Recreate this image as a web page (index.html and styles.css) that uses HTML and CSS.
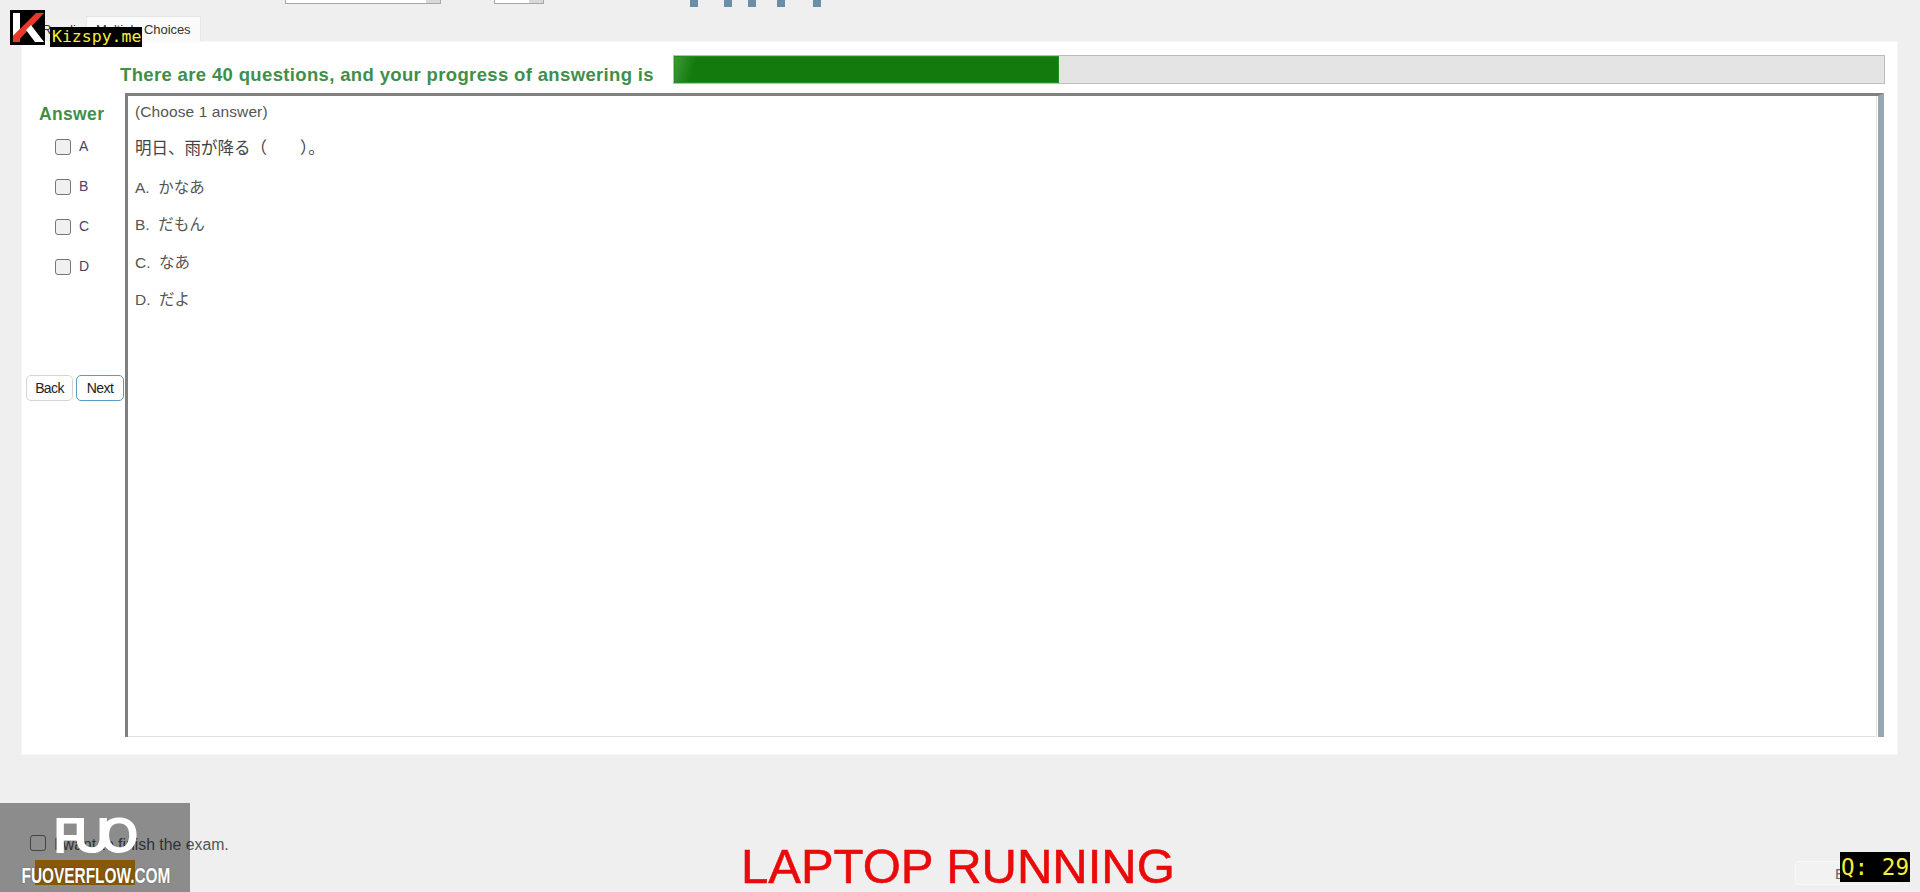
FILE: index.html
```html
<!DOCTYPE html>
<html lang="en">
<head>
<meta charset="utf-8">
<title>Multiple Choices</title>
<link rel="stylesheet" href="styles.css">
</head>
<body>
<div class="topbar">
  <div class="field field-wide"><span class="field-btn"></span></div>
  <div class="field field-small"><span class="field-btn"></span></div>
  <div class="ticks"><i></i><i></i><i></i><i></i><i></i></div>
</div>
<div class="tabs">
  <div class="tab">Reading</div>
  <div class="tab tab-active">Multiple Choices</div>
</div>
<main class="panel">
  <div class="progress-row">
    <div class="progress-text">There are 40 questions, and your progress of answering is</div>
    <div class="progress"><div class="progress-fill"></div></div>
  </div>
  <div class="work">
    <aside class="side">
      <div class="answer-title">Answer</div>
      <label class="opt"><input type="checkbox"><span>A</span></label>
      <label class="opt"><input type="checkbox"><span>B</span></label>
      <label class="opt"><input type="checkbox"><span>C</span></label>
      <label class="opt"><input type="checkbox"><span>D</span></label>
      <div class="nav">
        <button class="btn">Back</button>
        <button class="btn btn-focus">Next</button>
      </div>
    </aside>
    <section class="question">
      <div class="q-scroll">
        <p class="q-hint">(Choose 1 answer)</p>
        <p class="q-line q-main">明日、雨が降る（　　）。</p>
        <p class="q-line">A.&nbsp; かなあ</p>
        <p class="q-line">B.&nbsp; だもん</p>
        <p class="q-line">C.&nbsp; なあ</p>
        <p class="q-line">D.&nbsp; だよ</p>
      </div>
    </section>
  </div>
</main>
<footer class="footer">
  <div class="finish">
    <label class="finish-check"><input type="checkbox"><span>I want to finish the exam.</span></label>
    <div class="finish-btn"></div>
  </div>
  <div class="status">LAPTOP RUNNING</div>
  <button class="exit">Exit</button>
</footer>

<div class="wm-k">
  <svg width="35" height="35" viewBox="0 0 35 35">
    <rect width="35" height="35" fill="#000"/>
    <path d="M3 3h7v17l-7 7z" fill="#fff"/>
    <path d="M26 3h8L7 32H3v-6z" fill="#e8392a"/>
    <path d="M3 26l7-7v13H3z" fill="#e8392a"/>
    <path d="M16 20l5-5 13 17h-9z" fill="#fff"/>
  </svg>
</div>
<div class="wm-kizspy">Kizspy.me</div>
<div class="wm-q">Q: 29</div>
<div class="wm-fuo">
  <div class="wm-fuo-logo">FUO</div>
  <div class="wm-fuo-site">FUOVERFLOW.COM</div>
</div>
</body>
</html>
```
FILE: styles.css
```css
* { box-sizing: border-box; }
html, body { margin: 0; padding: 0; }
body {
  width: 1920px;
  height: 892px;
  overflow: hidden;
  background: #efefef;
  font-family: "Liberation Sans", Arial, sans-serif;
  color: #444;
  position: relative;
}
.topbar {
  height: 16px;
  display: flex;
  align-items: flex-start;
  padding-left: 285px;
}
.field {
  height: 4px;
  background: #fff;
  border: 1px solid #a8a8a8;
  border-top: 0;
  display: flex;
  justify-content: flex-end;
}
.field-wide { width: 156px; }
.field-small { width: 50px; margin-left: 53px; }
.field-btn { width: 14px; background: #d8d8d8; }
.ticks { display: flex; margin-left: 146px; }
.ticks i {
  display: block;
  width: 8px;
  height: 7px;
  background: #6a8ea8;
}
.ticks i:nth-child(2) { margin-left: 26px; }
.ticks i:nth-child(3) { margin-left: 16px; }
.ticks i:nth-child(4) { margin-left: 21px; }
.ticks i:nth-child(5) { margin-left: 28px; }
.tabs {
  height: 25px;
  display: flex;
  align-items: flex-end;
  padding-left: 36px;
}
.tab {
  width: 50px;
  height: 22px;
  font-size: 13px;
  line-height: 22px;
  padding-left: 6px;
  color: #333;
  background: #f0f0f0;
}
.tab-active {
  width: 115px;
  height: 25px;
  line-height: 25px;
  padding-left: 9px;
  background: #fafafa;
  border: 1px solid #e6e6e6;
  border-bottom: 0;
  letter-spacing: -0.05px;
}
.panel {
  width: 1877px;
  height: 714px;
  margin-left: 21px;
  background: #fff;
  border: 1px solid #f7f7f7;
  padding-top: 13px;
}
.progress-row {
  display: flex;
  align-items: center;
  height: 29px;
  padding-left: 98px;
}
.progress-text {
  width: 553px;
  font-size: 18.5px;
  font-weight: bold;
  letter-spacing: 0.35px;
  color: #3f8f4a;
  white-space: nowrap;
  padding-top: 10px;
}
.progress {
  width: 1212px;
  height: 29px;
  background: #e4e4e4;
  border: 1px solid #bcbcbc;
}
.progress-fill {
  width: 385px;
  height: 100%;
  background: linear-gradient(105deg, #3f9a38 0, #137b0e 22px);
  box-shadow: inset 0 0 0 1px #2c8a26;
}
.work {
  display: flex;
  height: 644px;
  margin-top: 9px;
}
.side {
  width: 103px;
  flex: none;
}
.answer-title {
  height: 27px;
  padding: 11px 0 0 17px;
  font-size: 17.5px;
  line-height: 20px;
  font-weight: bold;
  letter-spacing: 0.35px;
  color: #3f8f4a;
  white-space: nowrap;
}
.opt {
  display: flex;
  align-items: center;
  height: 40px;
  padding: 13px 0 0 33px;
  font-size: 14px;
  color: #444466;
}
.opt input, .finish-check input {
  width: 16px;
  height: 16px;
  margin: 0;
  appearance: none;
  background: #f0f0f0;
  border: 1.5px solid #767676;
  border-radius: 3px;
}
.opt span { margin-left: 8px; position: relative; top: -1px; }
.nav {
  display: flex;
  gap: 3px;
  padding: 95px 0 0 4px;
}
.btn {
  height: 26px;
  width: 47px;
  padding: 0;
  font: 14px "Liberation Sans", Arial, sans-serif;
  letter-spacing: -0.6px;
  color: #222;
  background: #fff;
  border: 1px solid #d4d4d4;
  border-radius: 5px;
}
.btn-focus { width: 48px; border: 1.5px solid #5d9ac6; }
.question {
  width: 1759px;
  height: 644px;
  flex: none;
  display: flex;
  background: #fff;
  border-top: 3px solid #808080;
  border-left: 3px solid #808080;
  border-right: 6px solid #94a7b3;
}
.q-scroll {
  flex: 1;
  height: 100%;
  padding: 7px 0 0 7px;
  border-bottom: 1px solid #e2e2e2;
  border-right: 1px solid #e2e2e2;
  margin-right: 1px;
}
.q-hint { margin: 0; font-size: 15.5px; line-height: 18px; color: #555; letter-spacing: 0.1px; }
.q-line {
  margin: 0;
  height: 37.5px;
  display: flex;
  align-items: center;
  font-family: "Liberation Sans", "Noto Sans CJK JP", sans-serif;
  font-size: 15.5px;
  color: #555;
  white-space: pre;
}
.q-main { height: 40px; margin-top: 6px; font-size: 16.5px; color: #444; }
.footer {
  height: 137px;
  display: flex;
}
.finish { padding: 80px 0 0 30px; width: 500px; flex: none; }
.finish-check { display: flex; align-items: center; gap: 8px; height: 16px; font-size: 15.8px; color: #555; }
.finish-check span { position: relative; top: 2px; }
.finish-btn { width: 100px; height: 25px; margin: 9px 0 0 5px; background: #e6960f; }
.status {
  flex: 1;
  padding: 84px 0 0 241px;
  font-size: 49px;
  line-height: 55px;
  color: #ea0a0a;
  -webkit-text-stroke: 0.6px #ea0a0a;
  white-space: nowrap;
}
.exit {
  width: 105px;
  height: 24px;
  margin: 106px 20px 0 0;
  padding: 0;
  background: #f2f2f2;
  border: 1.5px solid #f8f8f8;
  border-radius: 3px;
  font: 15px "Liberation Sans", Arial, sans-serif;
  color: #666;
}
.wm-k { position: absolute; left: 10px; top: 10px; width: 35px; height: 35px; line-height: 0; }
.wm-kizspy {
  position: absolute;
  left: 50px;
  top: 27px;
  width: 92px;
  height: 20px;
  background: #000;
  color: #f2ee3a;
  font: 16.5px/20px "DejaVu Sans Mono", monospace;
  padding-left: 2px;
  white-space: nowrap;
}
.wm-q {
  position: absolute;
  left: 1840px;
  top: 852px;
  width: 70px;
  height: 30px;
  background: #000;
  color: #f2ee3a;
  font: 22.6px/30px "DejaVu Sans Mono", monospace;
  padding-left: 1px;
  white-space: nowrap;
}
.wm-fuo {
  position: absolute;
  left: 0;
  top: 803px;
  width: 190px;
  height: 89px;
  background: rgba(0, 0, 0, 0.41);
  color: #fff;
  text-align: center;
}
.wm-fuo-logo {
  margin-top: 9px;
  padding-right: 8px;
  height: 44px;
  font-size: 50px;
  line-height: 48px;
  font-weight: bold;
  letter-spacing: -10px;
}
.wm-fuo-site {
  margin-top: 9px;
  font-size: 22px;
  line-height: 22px;
  font-weight: bold;
  white-space: nowrap;
  transform: translateX(-7px) scaleX(0.7);
  text-shadow: 0 0 2px rgba(0, 0, 0, 0.4);
}
```
